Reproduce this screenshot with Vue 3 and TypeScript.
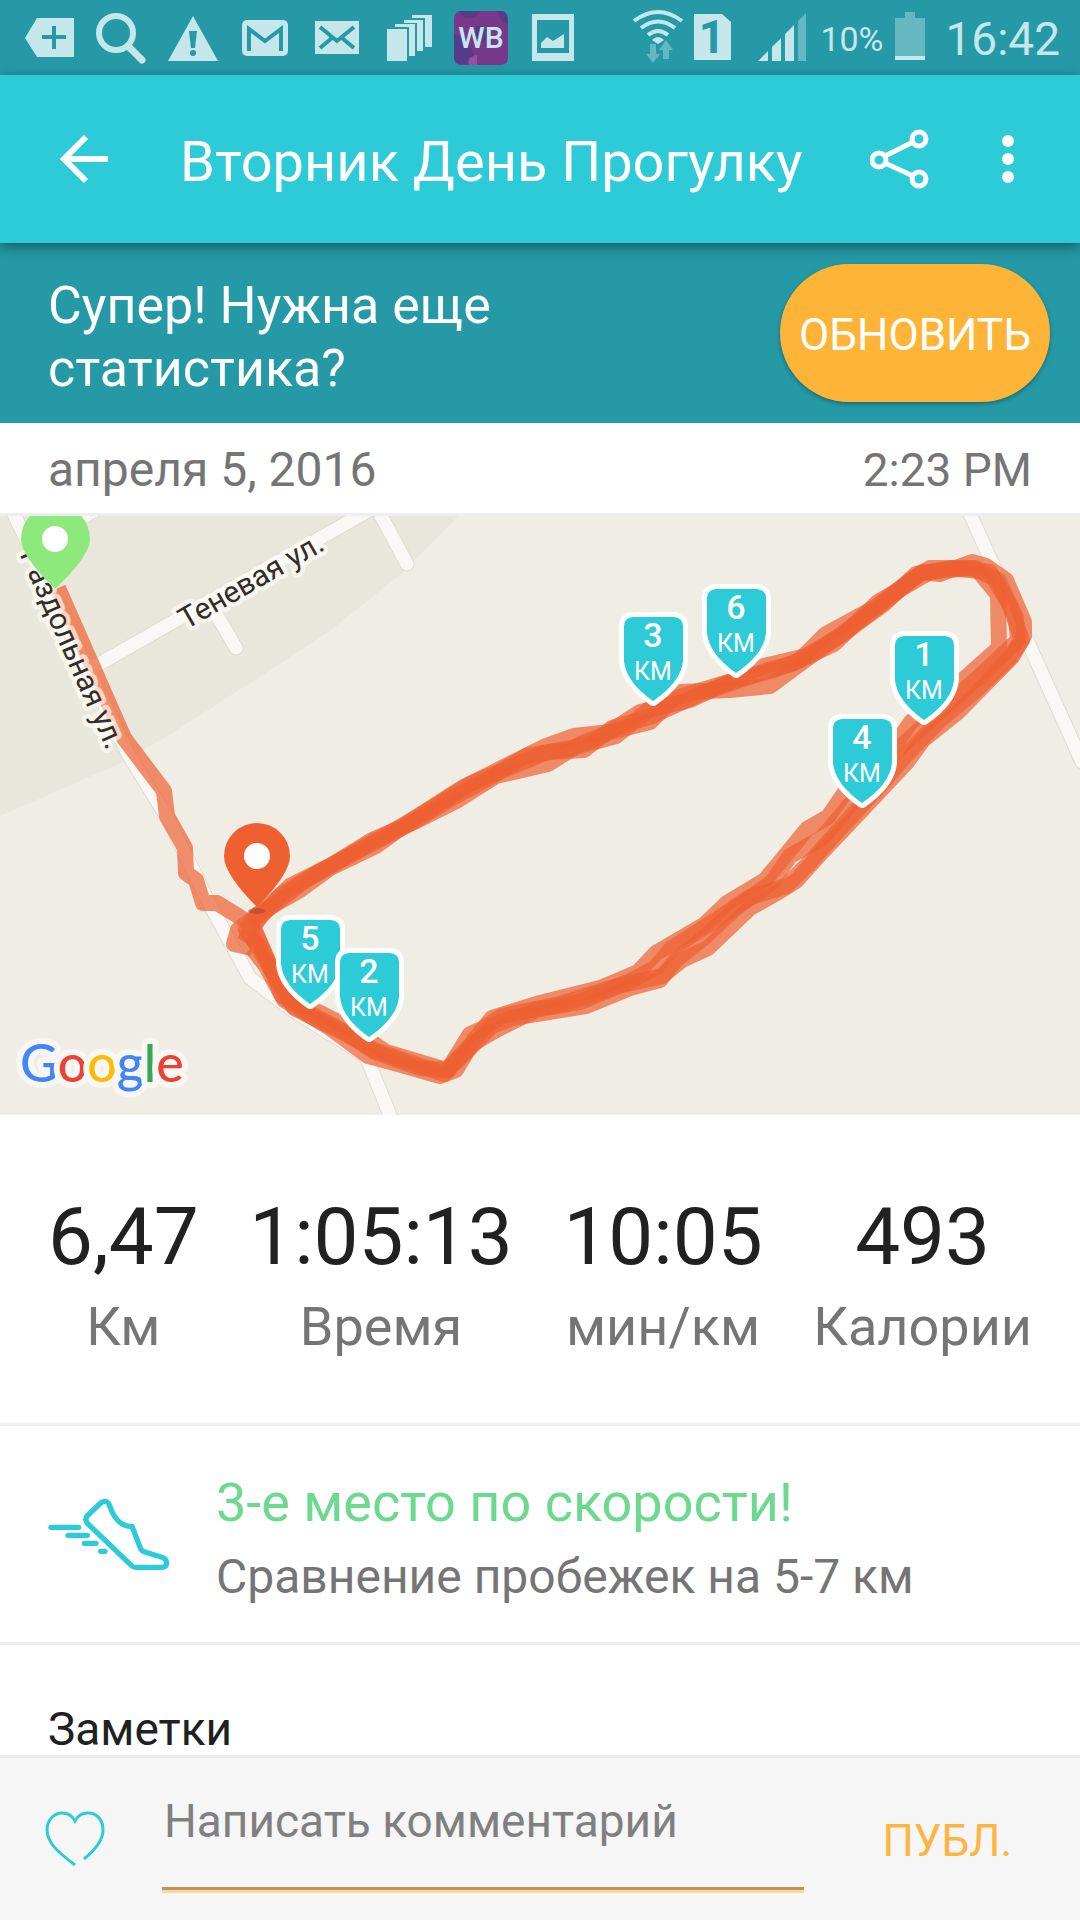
<script setup lang="ts">
import { ref } from 'vue'

interface Stat {
  value: string
  label: string
}

interface KmMarker {
  km: number
  x: number
  y: number
}

const stats: Stat[] = [
  { value: '6,47', label: 'Км' },
  { value: '1:05:13', label: 'Время' },
  { value: '10:05', label: 'мин/км' },
  { value: '493', label: 'Калории' },
]

const markers: KmMarker[] = [
  { km: 1, x: 890, y: 631 },
  { km: 3, x: 619, y: 612 },
  { km: 4, x: 828, y: 714 },
  { km: 5, x: 276, y: 915 },
  { km: 6, x: 702, y: 584 },
  { km: 2, x: 335, y: 948 },
]

// GPS trace: the walk to the loop, then several laps drawn over each other
const approach =
  'M58 588L124 738L164 791L167 816L185 848L186 873L196 880L203 903L217 903L248 922'

const laps: string[] = [
  'M248 922L256 934L268 962L284 1000L330 1028L368 1056L398 1064L440 1076L456 1070L474 1040L492 1018L540 1003L600 988L638 972L656 953L704 925L727 903L765 880L780 862L807 829L828 817L850 785L895 745L911 722L963 680L999 648L998 595L976 568L946 570L916 574L884 604L840 636L806 656L764 666L720 686L690 700L640 712L606 734L580 744L548 764L496 776L458 800L414 822L372 840L330 866L290 886L262 912L238 930L234 944L252 948',
  'M252 948L266 966L282 996L304 1010L345 1032L375 1052L420 1068L448 1070L470 1034L484 1028L502 1016L560 1004L618 986L662 976L682 960L708 948L750 908L780 891L796 881L823 851L861 811L907 762L923 740L958 712L1012 657L1024 636L1024 622L1006 580L986 566L972 562L940 574L922 572L882 604L836 638L808 658L770 686L730 690L680 692L650 722L610 732L574 736L546 746L502 768L462 788L412 820L376 846L330 868L300 890L258 914L246 930L262 950',
  'M250 934L274 974L294 1008L346 1034L374 1050L444 1074L462 1056L492 1026L512 1018L586 1006L630 988L660 980L676 960L706 936L736 908L772 882L790 856L822 838L854 800L895 752L930 720L980 676L1018 640L1016 618L998 580L972 568L930 568L908 582L874 608L826 634L800 660L774 670L722 684L656 704L616 736L572 748L526 756L486 780L452 798L410 824L360 850L322 870L282 894L252 926',
  'M252 924L272 970L292 1000L318 1012L350 1028L386 1052L446 1070L472 1044L496 1030L536 1010L580 1002L628 982L655 968L672 948L716 920L748 898L786 886L812 860L846 822L876 790L905 756L940 720L976 690L1008 660L1022 640L1010 606L990 572L950 568L930 572L878 602L834 644L792 664L768 670L700 694L652 716L612 728L584 750L548 752L508 768L470 784L416 818L362 848L306 880L262 914L244 942',
]

const comment = ref('')
</script>

<template>
  <main class="screen">
    <div class="status">
      <div class="tray">
        <svg viewBox="0 0 72 75" class="cell"><path d="M12 38L24 18H61V57H24Z" /><path class="cut" d="M41 26V49M29 37H53" /></svg>
        <svg viewBox="0 0 72 75" class="cell"><circle class="line" cx="31" cy="33" r="17" stroke-width="6" /><path class="line" d="M43 46L57 60" stroke-width="7" stroke-linecap="round" /></svg>
        <svg viewBox="0 0 72 75" class="cell"><path d="M36 16L61 61H11Z" /><path d="M32 31H40L38 48H34Z" fill="#2599a6" /><circle cx="36" cy="53" r="3" fill="#2599a6" /></svg>
        <svg viewBox="0 0 72 75" class="cell"><rect x="13" y="20" width="46" height="36" rx="5" /><path class="cut" d="M20 51V29L36 41L52 29V51" /></svg>
        <svg viewBox="0 0 72 75" class="cell"><path d="M14 21H58V54H14Z" /><path class="cut" d="M19 27L36 41L53 27M19 48L31 38M53 48L41 38" /></svg>
        <svg viewBox="0 0 72 75" class="cell"><path d="M14 29H34V61H14ZM22 24H42V56H36V27H22ZM31 20H50V51H44V23H31ZM39 15H59V47H52V18H39Z" /></svg>
        <svg viewBox="0 0 72 75" class="cell">
          <rect x="9" y="11" width="54" height="54" rx="7" fill="#79398a" />
          <path d="M14 11H35Q32 19 23 18Q16 18 14 11ZM53 11H57Q63 13 63 24Q54 22 53 11ZM9 34Q20 36 24 46Q31 52 28 64H16Q9 63 9 57ZM30 27Q42 22 44 36Q38 48 30 40Z" fill="#563b88" />
          <path d="M24 65Q21 57 32 55V65Z" fill="#964da5" />
          <text x="36" y="48" class="wb">WB</text>
        </svg>
        <svg viewBox="0 0 72 75" class="cell"><path d="M15 14H57V61H15Z" /><path d="M20 20H52V53H20Z" fill="#2599a6" /><path d="M24 48V43L30 37L36 41L47 34V48Z" /></svg>
      </div>
      <div class="signals">
        <svg viewBox="0 0 52 75" class="wifi">
          <path class="line" d="M2 21Q26 3 50 21M9 28Q26 15 43 28M16 35Q26 27 36 35" stroke-width="4" />
          <path d="M20 40Q26 34 32 40L26 44Z" />
          <g opacity=".4"><path d="M18 44H24V54H28L21 63L14 54H18Z" /><path d="M31 59V50H27L34 40L41 50H37V59Z" /></g>
        </svg>
        <svg viewBox="0 0 38 75" class="sim"><path d="M0 14H28L37 22V60H0Z" /><text x="18" y="53" class="sim-no">1</text></svg>
        <svg viewBox="0 0 50 75" class="bars"><path d="M0 61L10 51V61ZM14 61V47L23 38V61ZM27 61V34L36 25V61Z" /><path d="M40 61V21L48 13V61Z" opacity=".4" /></svg>
        <span class="percent">10%</span>
        <svg viewBox="0 0 30 75" class="battery"><path d="M10 12H20V18H30V60H0V18H10Z" opacity=".4" /><path d="M0 56H30V60H0Z" /></svg>
        <time class="clock">16:42</time>
      </div>
    </div>

    <header class="appbar">
      <button class="icon-btn" type="button" aria-label="Назад">
        <svg viewBox="0 0 60 60" width="60" height="60"><path d="M54 30H11M32 8L10 30L32 52" fill="none" stroke="#fff" stroke-width="6" /></svg>
      </button>
      <h1 class="title">Вторник День Прогулку</h1>
      <button class="icon-btn share" type="button" aria-label="Поделиться">
        <svg viewBox="0 0 60 60" width="60" height="60"><g fill="none" stroke="#fff" stroke-width="5"><circle cx="49" cy="10" r="7" /><circle cx="9" cy="31" r="7" /><circle cx="49" cy="50" r="7" /><path d="M43 13L15 27M15 34L43 47" /></g></svg>
      </button>
      <button class="icon-btn" type="button" aria-label="Меню">
        <svg viewBox="0 0 12 60" width="12" height="60"><g fill="#fff"><circle cx="6" cy="12" r="6" /><circle cx="6" cy="30" r="6" /><circle cx="6" cy="48" r="6" /></g></svg>
      </button>
    </header>

    <section class="promo">
      <p class="promo-text">Супер! Нужна еще статистика?</p>
      <button class="upgrade" type="button">ОБНОВИТЬ</button>
    </section>

    <div class="date">
      <span class="day">апреля 5, 2016</span>
      <time>2:23 PM</time>
    </div>

    <svg class="map" viewBox="0 516 1080 599">
      <path d="M0 516H458L406 570L327 633L193 720L126 761L0 816Z" fill="#e9e7db" />
      <g class="road-edge">
        <path d="M12 510L128 754L168 819L210 905L250 978L292 1010L366 1056L394 1125" />
        <path d="M92 668L380 504M378 510L407 564M215 612L236 648M70 524L96 510" />
        <path d="M966 505L1082 762" />
      </g>
      <g class="road">
        <path d="M12 510L128 754L168 819L210 905L250 978L292 1010L366 1056L394 1125" />
        <path d="M92 668L380 504M378 510L407 564M215 612L236 648M70 524L96 510" />
        <path d="M966 505L1082 762" />
      </g>
      <path :d="approach" class="lap" />
      <path v-for="(lap, i) in laps" :key="i" :d="lap" class="lap" />
      <text class="street" transform="translate(186 630) rotate(-30)">Теневая ул.</text>
      <text class="street" text-anchor="end" transform="translate(107 751) rotate(66)">Раздольная ул.</text>
      <ellipse cx="257" cy="911" rx="9" ry="3" fill="#a84a2c" opacity=".6" />
      <path d="M55 589Q21 556 21 539A34 34 0 0 1 90 539Q90 556 55 589Z" fill="#8ee97d" />
      <circle cx="55" cy="539" r="13" fill="#fff" />
      <path d="M257 907Q224 874 224 856A33 33 0 0 1 290 856Q290 874 257 907Z" fill="#ee6030" />
      <circle cx="257" cy="856" r="13" fill="#fff" />
      <g v-for="m in markers" :key="m.km" :transform="`translate(${m.x} ${m.y})`">
        <path class="shield" d="M14 5H55Q64 6 64 14V49Q62 70 34 89Q7 70 5 49V14Q5 6 14 5Z" />
        <text x="34" y="35" class="km-no">{{ m.km }}</text>
        <text x="34" y="68" class="km">КМ</text>
      </g>
      <text x="20" y="1082" class="google"><tspan fill="#4285f4">G</tspan><tspan fill="#ea4335">o</tspan><tspan fill="#fbbc05">o</tspan><tspan fill="#4285f4">g</tspan><tspan fill="#34a853">l</tspan><tspan fill="#ea4335">e</tspan></text>
    </svg>

    <dl class="stats">
      <div v-for="s in stats" :key="s.label" class="stat">
        <dd>{{ s.value }}</dd>
        <dt>{{ s.label }}</dt>
      </div>
    </dl>

    <section class="award">
      <svg class="shoe" viewBox="81 54 366 219">
        <path d="M90 142H173M141 166H199M190 190H225M239 214H252M200 106L239 69Q257 57 265 75Q287 141 333 139L359 206Q363 214 371 216L421 231Q437 236 437 250Q436 262 423 262H344Q337 262 331 256L200 131Q189 118 200 106Z" />
      </svg>
      <div class="award-text">
        <h2 class="award-title">3-е место по скорости!</h2>
        <p class="award-sub">Сравнение пробежек на 5-7 км</p>
      </div>
    </section>

    <section class="notes"><h2>Заметки</h2></section>

    <form class="composer" @submit.prevent>
      <button class="like" type="button" aria-label="Нравится">
        <svg viewBox="0 0 62 58" width="62" height="58"><path d="M31 55C15 43 3 33 3 20C3 8 12 3 18 3C25 3 29 7 31 11C33 7 37 3 44 3C53 3 59 10 59 20C59 31 51 40 40 49" fill="none" stroke="#2dcad7" stroke-width="3" /></svg>
      </button>
      <input v-model="comment" class="field" type="text" aria-label="Комментарий" placeholder="Написать комментарий" />
      <button class="send" type="submit">ПУБЛ.</button>
    </form>
  </main>
</template>

<style>
body {
  margin: 0;
  background: #fff;
}
</style>

<style scoped>
.screen {
  display: flex;
  flex-direction: column;
  min-height: 100vh;
  font-family: Roboto, "Noto Sans", sans-serif;
  color: #212121;
}
button {
  padding: 0;
  border: 0;
  background: none;
  font: inherit;
  color: inherit;
}
h1,
h2,
p,
dl,
dd {
  margin: 0;
  font-weight: 400;
}
.status {
  display: flex;
  justify-content: space-between;
  height: 75px;
  padding: 0 20px 0 13px;
  background: #2599a6;
  color: #c5e7ec;
}
.status svg {
  flex: none;
  height: 75px;
  fill: #c5e7ec;
}
.status .line {
  fill: none;
  stroke: #c5e7ec;
}
.cut {
  fill: none;
  stroke: #2599a6;
  stroke-width: 4;
}
.tray,
.signals {
  display: flex;
}
.cell {
  width: 72px;
}
.wb {
  font-size: 30px;
  font-weight: 500;
  text-anchor: middle;
}
.sim-no {
  font-size: 46px;
  font-weight: 700;
  text-anchor: middle;
  fill: #2599a6;
}
.wifi {
  width: 52px;
  margin-right: 10px;
}
.sim {
  width: 38px;
  margin-right: 26px;
}
.bars {
  width: 50px;
}
.percent {
  width: 87px;
  font-size: 34px;
  line-height: 78px;
  text-align: center;
}
.battery {
  width: 30px;
  margin-right: 20px;
}
.clock {
  font-size: 46px;
  line-height: 78px;
}
.appbar {
  position: relative;
  display: flex;
  align-items: center;
  height: 168px;
  padding: 0 66px 0 54px;
  background: #2dcad7;
  box-shadow: 0 4px 12px rgba(0, 0, 0, 0.4);
  color: #fff;
}
.icon-btn {
  display: flex;
}
.title {
  flex: 1;
  padding: 6px 0 0 66px;
  font-size: 56px;
  line-height: 72px;
  white-space: nowrap;
}
.share {
  margin-right: 72px;
}
.promo {
  display: flex;
  align-items: center;
  justify-content: space-between;
  height: 180px;
  padding: 0 30px 0 48px;
  background: #2599a6;
  color: #fff;
}
.promo-text {
  width: 500px;
  padding-top: 8px;
  font-size: 52px;
  line-height: 63px;
}
.upgrade {
  width: 270px;
  height: 138px;
  padding-top: 4px;
  border-radius: 69px;
  background: #feb537;
  box-shadow: 0 2px 4px rgba(0, 0, 0, 0.3);
  font-size: 44px;
}
.date {
  display: flex;
  justify-content: space-between;
  padding: 4px 48px 0;
  border-bottom: 3px solid #eee;
  font-size: 46px;
  line-height: 86px;
  color: #757575;
}
.day {
  font-size: 48px;
}
.map {
  display: block;
  width: 100%;
  background: #f0ede5;
}
.road-edge,
.road {
  fill: none;
  stroke: #dddcd4;
  stroke-width: 15;
  stroke-linecap: round;
}
.road {
  stroke: #f9f8f4;
  stroke-width: 13;
}
.lap {
  fill: none;
  stroke: #ee6030;
  stroke-opacity: 0.7;
  stroke-width: 16;
  stroke-linejoin: round;
}
.street {
  font-size: 30px;
  fill: #322d28;
  stroke: #fffdf8;
  stroke-opacity: 0.65;
  stroke-width: 9;
  stroke-linejoin: round;
  paint-order: stroke;
}
.shield {
  fill: #2dcad7;
  stroke: #fff;
  stroke-width: 10;
  stroke-linejoin: round;
  paint-order: stroke;
}
.km-no,
.km {
  font-size: 34px;
  font-weight: 500;
  text-anchor: middle;
  fill: #fff;
}
.km {
  font-size: 25px;
  font-weight: 400;
}
.google {
  font-family: Lato, sans-serif;
  font-size: 52px;
  font-weight: 500;
  stroke: #f8f7f3;
  stroke-width: 12;
  stroke-linejoin: round;
  paint-order: stroke;
}
.stats {
  display: flex;
  justify-content: space-between;
  padding: 74px 48px 54px;
  border-bottom: 3px solid #eee;
}
.stat {
  display: flex;
  flex-direction: column;
  align-items: center;
}
.stat dd {
  font-size: 80px;
  line-height: 96px;
}
.stat dt {
  order: 1;
  font-size: 54px;
  line-height: 84px;
  color: #757575;
}
.award {
  display: flex;
  align-items: center;
  gap: 46px;
  height: 216px;
  padding: 0 48px;
  border-bottom: 3px solid #eee;
}
.shoe {
  flex: none;
  width: 122px;
  height: 73px;
  fill: none;
  stroke: #2dcad7;
  stroke-width: 16;
  stroke-linecap: round;
  stroke-linejoin: round;
}
.award-text {
  padding-top: 12px;
}
.award-title {
  font-size: 54px;
  line-height: 74px;
  color: #6dd98f;
}
.award-sub {
  font-size: 48px;
  line-height: 74px;
  color: #757575;
}
.notes {
  flex: 1;
  padding: 50px 48px 0;
}
.notes h2 {
  font-size: 46px;
  line-height: 68px;
  margin-bottom: -8px;
}
.composer {
  display: flex;
  align-items: center;
  height: 162px;
  padding: 0 68px 0 44px;
  border-top: 3px solid #ebebeb;
  background: #f6f6f6;
}
.like {
  display: flex;
  margin-right: 56px;
}
.field {
  flex: 1;
  min-width: 0;
  height: 102px;
  margin-right: 78px;
  padding: 0 0 34px 2px;
  box-sizing: border-box;
  border: 0;
  border-bottom: 3px solid #b9955a;
  box-shadow: 0 3px 0 #fcd79a;
  background: none;
  font: inherit;
  font-size: 46px;
  outline: none;
}
.field::placeholder {
  color: #808080;
  opacity: 1;
}
.send {
  padding-top: 4px;
  font-size: 44px;
  color: #feb53f;
}
</style>
